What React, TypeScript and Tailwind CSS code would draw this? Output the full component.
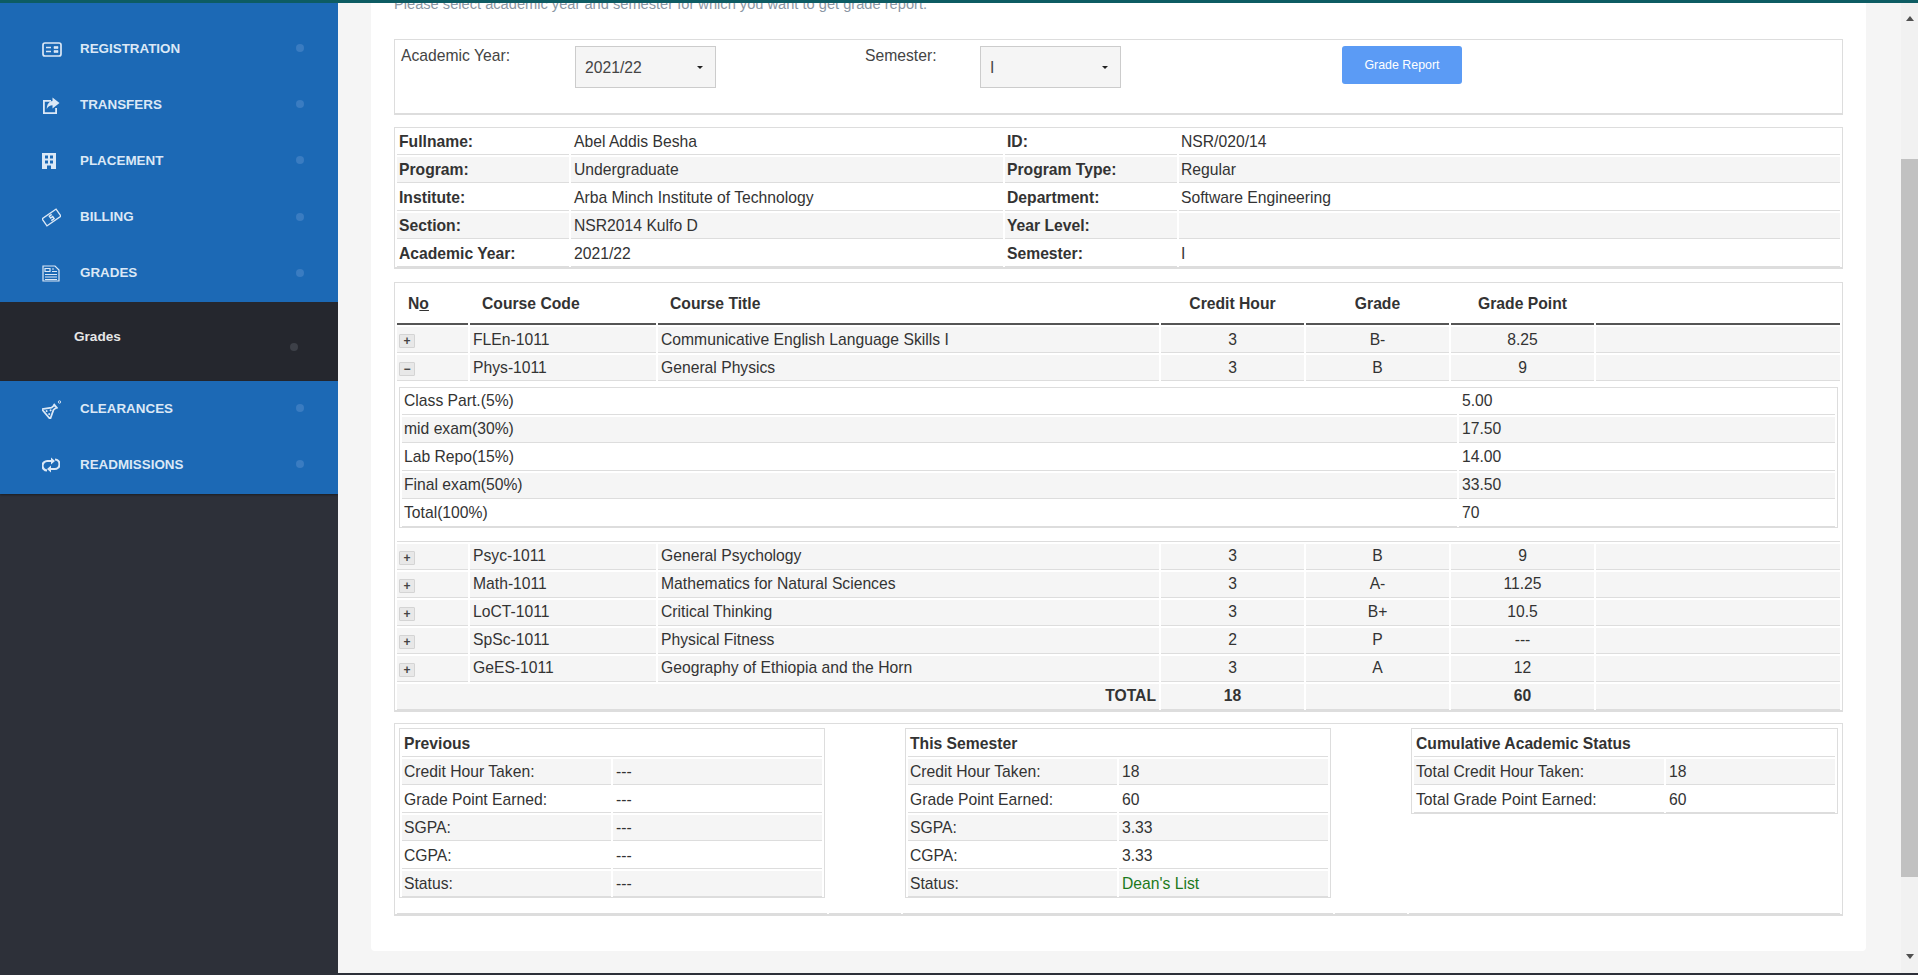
import React from 'react';

// sidebar entries, icons are drawn below
const CardIcon = () => (
  <svg viewBox="0 0 20 15" className="w-5 h-[15px]" fill="none" stroke="currentColor" strokeWidth="1.7">
    <rect x="1" y="1" width="18" height="13" rx="2" />
    <path d="M4 5.5h5M4 9.5h5" />
    <path d="M12 4.5h4v2h-4zM12 8.5h4v2h-4z" fill="currentColor" strokeWidth="0.6" />
  </svg>
);

const ShareIcon = () => (
  <svg viewBox="0 0 18 17" className="w-[18px] h-[17px]">
    <path d="M1 3h8v1.8H2.8v10.4h10.4V11H15v6H1z" fill="currentColor" />
    <path d="M10.5 0.5L17.5 6l-7 5.5V8.3C8 8.3 6 9.5 4.8 12c0-4.5 2.2-7.5 5.7-8z" fill="currentColor" />
  </svg>
);

const BuildingIcon = () => (
  <svg viewBox="0 0 14 16" className="w-[14px] h-4">
    <path
      fillRule="evenodd"
      fill="currentColor"
      d="M0 0h14v16H9v-3.5H5V16H0zM3 2.5v3h3v-3zM8 2.5v3h3v-3zM3 7.5v3h3v-3zM8 7.5v3h3v-3z"
    />
  </svg>
);

const TicketIcon = () => (
  <svg viewBox="0 0 20 20" className="w-[19px] h-[19px]" fill="none" stroke="currentColor" strokeWidth="1.4">
    <g transform="rotate(-35 10 10)">
      <rect x="1" y="5.5" width="18" height="9" />
      <path d="M12 7.5H9v2.5h2.5v2.5H8" strokeWidth="1.6" />
    </g>
  </svg>
);

const NewsIcon = () => (
  <svg viewBox="0 0 18 17" className="w-[18px] h-[17px]" fill="none" stroke="currentColor" strokeWidth="1.2">
    <path d="M1 1h12l4 4v11H1z" />
    <path d="M3 3.5h5v3H3zM10 4h2M10 6.5h5M3 9.5h12M3 12h12M3 14.5h12" />
  </svg>
);

const FlaskIcon = () => (
  <svg viewBox="0 0 20 20" className="w-5 h-5" fill="none" stroke="currentColor" strokeWidth="1.7">
    <g transform="rotate(50 9 11)">
      <path d="M6 5h6M7.5 5v4L2.5 17.5h13L10.5 9V5" strokeLinejoin="round" />
      <circle cx="9" cy="11.5" r="1" fill="currentColor" stroke="none" />
      <circle cx="7" cy="15" r="1" fill="currentColor" stroke="none" />
      <circle cx="11" cy="15" r="1" fill="currentColor" stroke="none" />
    </g>
    <circle cx="17.5" cy="3" r="1.2" strokeWidth="0.9" />
  </svg>
);

const SyncIcon = () => (
  <svg viewBox="0 0 18 18" className="w-[18px] h-[18px]" fill="none" stroke="currentColor" strokeWidth="2.2">
    <path d="M5 14.5A4.5 4.5 0 0 1 5.5 5H9" />
    <path d="M13 3.5A4.5 4.5 0 0 1 12.5 13H9" />
    <path d="M9 1.5L13 5L9 8.5zM9 9.5L5 13L9 16.5z" fill="currentColor" stroke="none" />
  </svg>
);

const menuTop = [
  { label: 'REGISTRATION', icon: <CardIcon /> },
  { label: 'TRANSFERS', icon: <ShareIcon /> },
  { label: 'PLACEMENT', icon: <BuildingIcon /> },
  { label: 'BILLING', icon: <TicketIcon /> },
  { label: 'GRADES', icon: <NewsIcon /> },
];

const menuBottom = [
  { label: 'CLEARANCES', icon: <FlaskIcon /> },
  { label: 'READMISSIONS', icon: <SyncIcon /> },
];

const infoRows = [
  ['Fullname:', 'Abel Addis Besha', 'ID:', 'NSR/020/14'],
  ['Program:', 'Undergraduate', 'Program Type:', 'Regular'],
  ['Institute:', 'Arba Minch Institute of Technology', 'Department:', 'Software Engineering'],
  ['Section:', 'NSR2014 Kulfo D', 'Year Level:', ''],
  ['Academic Year:', '2021/22', 'Semester:', 'I'],
];

const assessments = [
  ['Class Part.(5%)', '5.00'],
  ['mid exam(30%)', '17.50'],
  ['Lab Repo(15%)', '14.00'],
  ['Final exam(50%)', '33.50'],
  ['Total(100%)', '70'],
];

const coursesBefore = [
  ['FLEn-1011', 'Communicative English Language Skills I', '3', 'B-', '8.25', '+'],
  ['Phys-1011', 'General Physics', '3', 'B', '9', '-'],
];

const coursesAfter = [
  ['Psyc-1011', 'General Psychology', '3', 'B', '9', '+'],
  ['Math-1011', 'Mathematics for Natural Sciences', '3', 'A-', '11.25', '+'],
  ['LoCT-1011', 'Critical Thinking', '3', 'B+', '10.5', '+'],
  ['SpSc-1011', 'Physical Fitness', '2', 'P', '---', '+'],
  ['GeES-1011', 'Geography of Ethiopia and the Horn', '3', 'A', '12', '+'],
];

const MenuItem = ({ label, icon }: { label: string; icon: React.ReactNode }) => (
  <div className="h-[56.2px] flex items-center text-[#dbe8f6]">
    <div className="w-[42px] shrink-0" />
    <div className="w-[38px] shrink-0 flex">{icon}</div>
    <span className="flex-1 text-[13.4px] font-bold -mt-px">{label}</span>
    <span className="w-2 h-2 rounded-full bg-[#3a7cc1] mr-[34px] -mt-[2px]" />
  </div>
);

const Toggle = ({ sign }: { sign: string }) => (
  <span className="mt-[7px] w-4 h-[14px] flex items-center justify-center bg-[#e8e8e8] border border-[#d4d4d4] rounded-[1px] text-[#444] text-[12px] font-bold leading-none">
    {sign === '+' ? '+' : '−'}
  </span>
);

const Select = ({ value, className }: { value: string; className: string }) => (
  <div className={`h-[42px] w-[141px] flex items-center justify-between pl-[9px] pr-[12px] bg-[#f5f5f5] border border-[#ccc] ${className}`}>
    <span className="text-[#444] mt-px">{value}</span>
    <span className="w-0 h-0 border-x-[3px] border-x-transparent border-t-[3px] border-t-[#222]" />
  </div>
);

const CourseRow = ({ row, low }: { row: string[]; low?: boolean }) => {
  const pad = low ? 'pb-[1px]' : 'pt-[1px]';
  return (
    <tr>
      <td className="h-[26px] bg-[#f5f5f5] border-b border-[#ddd] pl-[2px] align-top">
        <Toggle sign={row[5]} />
      </td>
      <td className={`h-[26px] bg-[#f5f5f5] border-b border-[#ddd] pl-[3px] ${pad}`}>{row[0]}</td>
      <td className={`h-[26px] bg-[#f5f5f5] border-b border-[#ddd] pl-[3px] ${pad}`}>{row[1]}</td>
      <td className={`h-[26px] bg-[#f5f5f5] border-b border-[#ddd] text-center ${pad}`}>{row[2]}</td>
      <td className={`h-[26px] bg-[#f5f5f5] border-b border-[#ddd] text-center ${pad}`}>{row[3]}</td>
      <td className={`h-[26px] bg-[#f5f5f5] border-b border-[#ddd] text-center ${pad}`}>{row[4]}</td>
      <td className="h-[26px] bg-[#f5f5f5] border-b border-[#ddd]" />
    </tr>
  );
};

const StatTable = ({ title, rows, labelWidth }: { title: string; rows: [string, string, boolean?][]; labelWidth: string }) => (
  <div className="border border-[#ddd]">
    <table className="w-full table-fixed border-separate border-spacing-[2px] -mb-[2px]">
      <colgroup>
        <col className={labelWidth} />
        <col />
      </colgroup>
      <tbody>
        <tr>
          <td colSpan={2} className="h-[26px] border-b border-[#ddd] pl-[2px] font-bold">{title}</td>
        </tr>
        {rows.map(([label, value, green], i) => (
          <tr key={label}>
            <td className={`h-[26px] border-b border-[#ddd] pl-[2px] ${i % 2 === 0 ? 'bg-[#f5f5f5]' : ''}`}>{label}</td>
            <td className={`h-[26px] border-b border-[#ddd] pl-[3px] ${green ? 'text-[#1c7a1c]' : ''} ${i % 2 === 0 ? 'bg-[#f5f5f5]' : ''}`}>{value}</td>
          </tr>
        ))}
      </tbody>
    </table>
  </div>
);

export default function App() {
  return (
    <div className="h-[975px] overflow-hidden flex flex-col bg-[#2d3039] font-['Liberation_Sans',Arial,sans-serif] text-[15.7px] leading-[20px] text-[#333]">
      <div className="h-[3px] shrink-0 bg-[#0d5c63]" />
      <div className="h-[970px] flex shrink-0">
        {/* sidebar */}
        <aside className="w-[338px] shrink-0 bg-[#2d3039]">
          <div className="bg-[#1c69b5] pt-[18px]">
            {menuTop.map((m) => (
              <MenuItem key={m.label} {...m} />
            ))}
          </div>
          <div className="h-[79px] bg-[#25272e] pl-[74px] pt-[25px] pr-[40px] flex justify-between items-start">
            <span className="text-[13.6px] font-bold text-[#e6e6e6]">Grades</span>
            <span className="mt-[16px] w-2 h-2 rounded-full bg-[#3d4048]" />
          </div>
          <div className="bg-[#1c69b5] pb-px shadow-[0_1px_2px_rgba(0,0,0,0.4)]">
            {menuBottom.map((m) => (
              <MenuItem key={m.label} {...m} />
            ))}
          </div>
        </aside>

        {/* page body */}
        <main className="flex-1 min-w-0 bg-[#f5f5f5] pl-[33px] pr-[35px]">
          <div className="h-[948px] overflow-hidden bg-white rounded-b-[4px] px-[23px]">
            <p className="-mt-[9px] text-[#8a96a3] text-[14.65px]">
              Please select academic year and semester for which you want to get grade report.
            </p>

            <div className="mt-[25px] h-[76px] border border-b-2 border-[#ddd] flex items-start">
              <span className="w-[180px] pl-[6px] pt-[6px] text-[#444]">Academic Year:</span>
              <Select value="2021/22" className="mt-[6px]" />
              <span className="ml-[149px] w-[115px] pt-[6px] text-[#444]">Semester:</span>
              <Select value="I" className="mt-[6px]" />
              <button className="ml-[221px] mt-[6px] w-[120px] h-[38px] rounded-[3px] bg-[#5b9bf5] text-white text-[12.4px]">
                Grade Report
              </button>
            </div>

            <div className="mt-[12px] border border-b-2 border-[#ddd]">
              <table className="-mt-px -mb-[2px] w-full table-fixed border-separate border-spacing-[2px]">
                <colgroup>
                  <col className="w-[172px]" />
                  <col className="w-[432px]" />
                  <col className="w-[172px]" />
                  <col />
                </colgroup>
                <tbody>
                  {infoRows.map((r, i) => {
                    const bg = i % 2 === 1 ? 'bg-[#f5f5f5]' : '';
                    return (
                      <tr key={r[0]}>
                        <td className={`h-[26px] border-b border-[#ddd] pl-[2px] ${bg} font-bold`}>{r[0]}</td>
                        <td className={`h-[26px] border-b border-[#ddd] pl-[3px] ${bg}`}>{r[1]}</td>
                        <td className={`h-[26px] border-b border-[#ddd] pl-[2px] ${bg} font-bold`}>{r[2]}</td>
                        <td className={`h-[26px] border-b border-[#ddd] pl-[2px] ${bg}`}>{r[3]}</td>
                      </tr>
                    );
                  })}
                </tbody>
              </table>
            </div>

            <div className="mt-[13px] border border-b-2 border-[#ddd]">
              <table className="-mt-px -mb-[2px] w-full table-fixed border-separate border-spacing-[2px]">
                <colgroup>
                  <col className="w-[71px]" />
                  <col className="w-[186px]" />
                  <col className="w-[501px]" />
                  <col className="w-[143px]" />
                  <col className="w-[143px]" />
                  <col className="w-[143px]" />
                  <col />
                </colgroup>
                <thead>
                  <tr className="font-bold">
                    <th className="h-[41px] border-b-2 border-[#555] text-left pl-[11px]">
                      N<u>o</u>
                    </th>
                    <th className="h-[41px] border-b-2 border-[#555] text-left pl-[12px]">Course Code</th>
                    <th className="h-[41px] border-b-2 border-[#555] text-left pl-[12px]">Course Title</th>
                    <th className="h-[41px] border-b-2 border-[#555]">Credit Hour</th>
                    <th className="h-[41px] border-b-2 border-[#555]">Grade</th>
                    <th className="h-[41px] border-b-2 border-[#555]">Grade Point</th>
                    <th className="h-[41px] border-b-2 border-[#555]" />
                  </tr>
                </thead>
                <tbody>
                  {coursesBefore.map((r) => (
                    <CourseRow key={r[0]} row={r} />
                  ))}
                  <tr>
                    <td colSpan={7} className="border-b border-[#ddd] pt-[4px] px-[2px] pb-[13px]">
                      <div className="border border-[#ddd]">
                        <table className="-mt-px -mb-[2px] w-full table-fixed border-separate border-spacing-[2px]">
                          <colgroup>
                            <col />
                            <col className="w-[376px]" />
                          </colgroup>
                          <tbody>
                            {assessments.map(([name, mark], i) => {
                              const bg = i % 2 === 1 ? 'bg-[#f5f5f5]' : '';
                              return (
                                <tr key={name}>
                                  <td className={`h-[26px] border-b border-[#ddd] pl-[2px] pb-[2px] ${bg}`}>{name}</td>
                                  <td className={`h-[26px] border-b border-[#ddd] pl-[3px] pb-[2px] ${bg}`}>{mark}</td>
                                </tr>
                              );
                            })}
                          </tbody>
                        </table>
                      </div>
                    </td>
                  </tr>
                  {coursesAfter.map((r) => (
                    <CourseRow key={r[0]} row={r} low />
                  ))}
                  <tr className="font-bold">
                    <td colSpan={3} className="h-[26px] bg-[#f5f5f5] border-b border-[#ddd] text-right pr-[3px] pb-[1px]">TOTAL</td>
                    <td className="h-[26px] bg-[#f5f5f5] border-b border-[#ddd] text-center pb-[1px]">18</td>
                    <td className="h-[26px] bg-[#f5f5f5] border-b border-[#ddd]" />
                    <td className="h-[26px] bg-[#f5f5f5] border-b border-[#ddd] text-center pb-[1px]">60</td>
                    <td className="h-[26px] bg-[#f5f5f5] border-b border-[#ddd]" />
                  </tr>
                </tbody>
              </table>
            </div>

            <div className="mt-[11px] border border-b-2 border-[#ddd]">
              <table className="-mt-px -mb-[2px] w-full table-fixed border-separate border-spacing-[2px]">
                <colgroup>
                  <col className="w-[430px]" />
                  <col className="w-[72px]" />
                  <col className="w-[430px]" />
                  <col className="w-[72px]" />
                  <col />
                </colgroup>
                <tbody>
                  <tr>
                    <td className="border-b border-[#ddd] p-[2px] pt-[3px] pb-[15px] align-top">
                      <StatTable
                        title="Previous"
                        labelWidth="w-[209px]"
                        rows={[
                          ['Credit Hour Taken:', '---'],
                          ['Grade Point Earned:', '---'],
                          ['SGPA:', '---'],
                          ['CGPA:', '---'],
                          ['Status:', '---'],
                        ]}
                      />
                    </td>
                    <td className="border-b border-[#ddd]" />
                    <td className="border-b border-[#ddd] p-[2px] pt-[3px] pb-[15px] align-top">
                      <StatTable
                        title="This Semester"
                        labelWidth="w-[209px]"
                        rows={[
                          ['Credit Hour Taken:', '18'],
                          ['Grade Point Earned:', '60'],
                          ['SGPA:', '3.33'],
                          ['CGPA:', '3.33'],
                          ['Status:', "Dean's List", true],
                        ]}
                      />
                    </td>
                    <td className="border-b border-[#ddd]" />
                    <td className="border-b border-[#ddd] p-[2px] pt-[3px] pb-[15px] align-top">
                      <StatTable
                        title="Cumulative Academic Status"
                        labelWidth="w-[250px]"
                        rows={[
                          ['Total Credit Hour Taken:', '18'],
                          ['Total Grade Point Earned:', '60'],
                        ]}
                      />
                    </td>
                  </tr>
                </tbody>
              </table>
            </div>
          </div>
        </main>

        {/* browser scrollbar */}
        <div className="w-[17px] shrink-0 bg-[#f1f1f1] flex flex-col items-center">
          <span className="mt-[13px] w-0 h-0 border-x-[4px] border-x-transparent border-b-[5px] border-b-[#505050]" />
          <div className="mt-[138px] w-full h-[718px] bg-[#c1c1c1]" />
          <span className="mt-[77px] w-0 h-0 border-x-[4px] border-x-transparent border-t-[5px] border-t-[#505050]" />
        </div>
      </div>
      <div className="flex-1 bg-[#2d3039]" />
    </div>
  );
}
